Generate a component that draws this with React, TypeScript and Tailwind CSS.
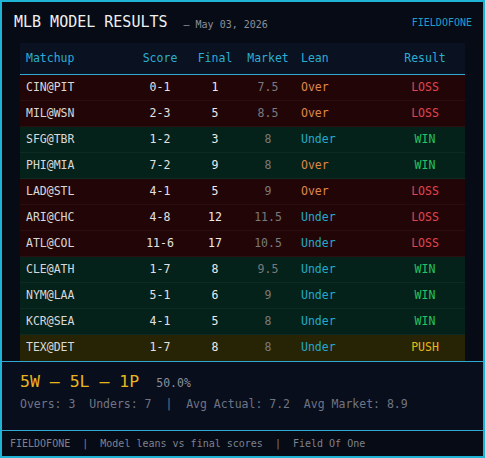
import { FC } from "react";

type Row = {
  matchup: string;
  score: string;
  final: string;
  market: string;
  lean: "Over" | "Under";
  result: "WIN" | "LOSS" | "PUSH";
};

const rows: Row[] = [
  { matchup: "CIN@PIT", score: "0-1", final: "1", market: "7.5", lean: "Over", result: "LOSS" },
  { matchup: "MIL@WSN", score: "2-3", final: "5", market: "8.5", lean: "Over", result: "LOSS" },
  { matchup: "SFG@TBR", score: "1-2", final: "3", market: "8", lean: "Under", result: "WIN" },
  { matchup: "PHI@MIA", score: "7-2", final: "9", market: "8", lean: "Over", result: "WIN" },
  { matchup: "LAD@STL", score: "4-1", final: "5", market: "9", lean: "Over", result: "LOSS" },
  { matchup: "ARI@CHC", score: "4-8", final: "12", market: "11.5", lean: "Under", result: "LOSS" },
  { matchup: "ATL@COL", score: "11-6", final: "17", market: "10.5", lean: "Under", result: "LOSS" },
  { matchup: "CLE@ATH", score: "1-7", final: "8", market: "9.5", lean: "Under", result: "WIN" },
  { matchup: "NYM@LAA", score: "5-1", final: "6", market: "9", lean: "Under", result: "WIN" },
  { matchup: "KCR@SEA", score: "4-1", final: "5", market: "8", lean: "Under", result: "WIN" },
  { matchup: "TEX@DET", score: "1-7", final: "8", market: "8", lean: "Under", result: "PUSH" },
];

const rowBg = {
  LOSS: "bg-[#220607]",
  WIN: "bg-[#05221a]",
  PUSH: "bg-[#262405]",
};

const resultColor = {
  LOSS: "text-[#e2434e]",
  WIN: "text-[#23c462]",
  PUSH: "text-[#e8b81a]",
};

const cols = "grid grid-cols-[112px_56px_54px_52px_90px_82px]";

const ResultRow: FC<{ row: Row }> = ({ row }) => (
  <div
    className={`${cols} h-[26px] items-center border-b border-white/[0.04] last:border-b-0 ${rowBg[row.result]}`}>
    <div className="pl-[6px] text-[#d8d8d8]">{row.matchup}</div>
    <div className="text-center text-[#e2e2e2]">{row.score}</div>
    <div className="text-center text-[#ececec]">{row.final}</div>
    <div className="text-center text-[#7a7a7a]">{row.market}</div>
    <div
      className={`pl-[7px] ${row.lean === "Over" ? "text-[#dd864a]" : "text-[#22aacb]"}`}>
      {row.lean}
    </div>
    <div className={`text-center ${resultColor[row.result]}`}>{row.result}</div>
  </div>
);

export default function App() {
  return (
    <div className="w-[485px] h-[458px] overflow-hidden bg-[#070b16] font-['DejaVu_Sans_Mono',monospace]">
      <div className="flex flex-col h-full border-2 border-[#1fb3d6]">
        {/* header */}
        <div className="flex items-center h-[41px] -ml-[2px] pl-[12px] pr-[11px] border-l-2 border-[#1fb3d6]">
          <div className="text-[15px] text-[#f0f0f0] leading-none">MLB MODEL RESULTS</div>
          <div className="ml-[16px] text-[10px] text-[#8a8f9a] mt-[3px]">— May 03, 2026</div>
          <div className="ml-auto text-[10px] text-[#1f9fc6]">FIELDOFONE</div>
        </div>

        {/* table */}
        <div className="px-[18px]">
          <div className="text-[11.5px] bg-[#0a1120]">
            <div className={`${cols} h-[32px] items-center border-b border-[#2fa8d4] text-[#2aaed4]`}>
              <div className="pl-[6px]">Matchup</div>
              <div className="text-center">Score</div>
              <div className="text-center">Final</div>
              <div className="text-center">Market</div>
              <div className="pl-[7px]">Lean</div>
              <div className="text-center">Result</div>
            </div>
            {rows.map((row) => (
              <ResultRow key={row.matchup} row={row} />
            ))}
          </div>
        </div>

        {/* summary */}
        <div className="h-[69px] border-t border-[#2fa8d4] bg-[#090e1c] px-[18px] pt-[8px]">
          <div className="flex items-baseline gap-[17px]">
            <span className="text-[16.5px] text-[#e7b520]">5W — 5L — 1P</span>
            <span className="text-[11.5px] text-[#8a8f9a]">50.0%</span>
          </div>
          <div className="mt-[1px] text-[11.5px] text-[#6f7584] whitespace-pre">
            Overs: 3  Unders: 7  |  Avg Actual: 7.2  Avg Market: 8.9
          </div>
        </div>

        {/* footer */}
        <div className="flex-1 flex items-center border-t border-[#2fa8d4] pl-[8px] text-[10px] text-[#7d828e] whitespace-pre">
          FIELDOFONE  |  Model leans vs final scores  |  Field Of One
        </div>
      </div>
    </div>
  );
}
